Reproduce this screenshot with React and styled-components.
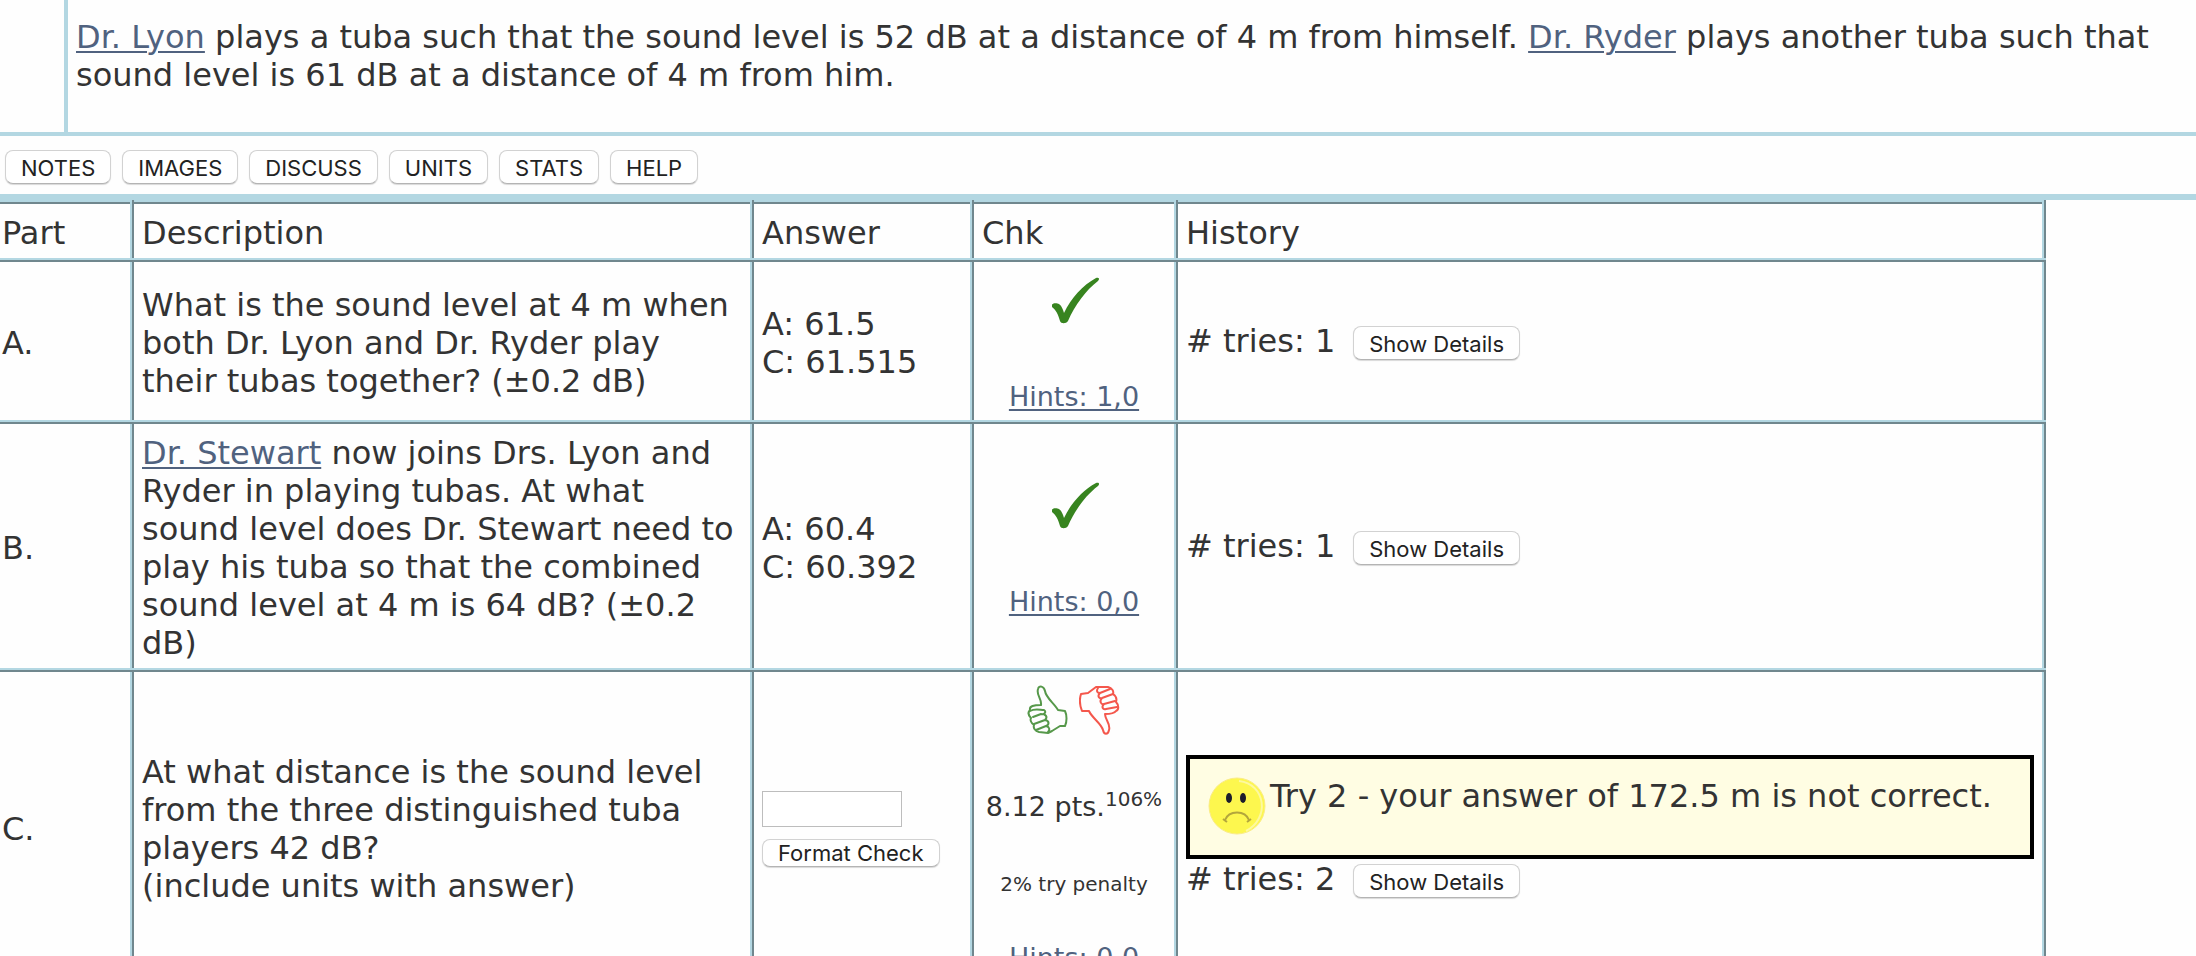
import React, { useState } from "react";
import styled, { createGlobalStyle } from "styled-components";

const tools = ["NOTES", "IMAGES", "DISCUSS", "UNITS", "STATS", "HELP"];

const CheckMark = () => (
  <svg width="60" height="54" viewBox="-2 0 60 54" role="img" aria-label="Correct">
    <path
      d="M6 34 C6 32 11 32 13 33 C16 35 17 39 18 42 C25 27 37 14 50 7 C53 6 54 8 52 10 C40 19 29 34 22 50 C20 53 15 53 14 50 C12 43 10 39 6 36 Z"
      fill="#37841f"
    />
  </svg>
);

const ThumbUp = () => (
  <svg width="42" height="56" viewBox="0 -3 42 56" role="img" aria-label="Thumb up">
    <g fill="none" stroke="#56984a" strokeWidth="2" strokeLinejoin="round" strokeLinecap="round">
      <path d="M14 21 C15 15 9 11 11 5 C12 1 17 2 18 7 C19 14 27 19 31 26 L38 27 C40 31 40 38 38 42 L33 42 L25 47 L21 49 L12 48 C8 47 6 44 7 41 C4 39 3 36 4 34 C1 31 1 28 3 26 C2 22 7 21 14 21 Z" />
      <path d="M3 27 C8 24 13 26 17 26 C20 28 17 31 14 30 L6 33 M14 30 C19 30 21 33 18 36 L7 40 M18 36 C23 37 22 41 19 42 L9 46 M19 42 C23 43 23 46 21 48" />
    </g>
  </svg>
);

const ThumbDown = () => (
  <svg width="42" height="56" viewBox="0 -1 42 56" role="img" aria-label="Thumb down">
    <g fill="none" stroke="#f4574c" strokeWidth="2" strokeLinejoin="round" strokeLinecap="round">
      <path d="M2 12 L9 11 L17 5 L29 5 C33 6 35 9 34 12 C37 14 38 17 37 20 C40 23 40 28 37 29 C35 32 30 32 26 32 C26 38 32 42 30 48 C29 53 25 53 24 48 C22 41 13 36 10 29 L3 29 C1 24 0 18 2 12 Z" />
      <path d="M19 6 C17 9 18 11 21 11 L31 7 M21 11 C18 14 20 17 23 16 L34 12 M23 16 C20 19 22 23 25 22 L36 19 M25 22 C22 25 24 28 27 27 L38 25" />
    </g>
  </svg>
);

const SadFace = () => (
  <svg width="60" height="60" viewBox="-1 0 60 60" role="img" aria-label="Incorrect">
    <circle cx="30" cy="29" r="28" fill="#fdf74e" stroke="#fbec86" strokeWidth="1" />
    <path d="M32 4 C59 7 63 42 39 54" fill="none" stroke="#fdf9a0" strokeWidth="2" />
    <ellipse cx="22" cy="21" rx="3" ry="5" fill="#1c1c2c" />
    <ellipse cx="36" cy="21" rx="3" ry="5" fill="#1c1c2c" />
    <path d="M18 43 C22 33 38 33 42 43" fill="none" stroke="#b3a63c" strokeWidth="2" />
    <path d="M16 42 L20 45 M40 45 L44 42" stroke="#b3a63c" strokeWidth="2" />
  </svg>
);

function Tries({ count }) {
  return (
    <TriesLine>
      # tries: {count} <DetailsButton type="button">Show Details</DetailsButton>
    </TriesLine>
  );
}

export default function App() {
  const [answer, setAnswer] = useState("");
  return (
    <Page>
      <GlobalStyle />
      <Problem>
        <Statement>
          <a href="#lyon">Dr. Lyon</a> plays a tuba such that the sound level is 52 dB at a
          distance of 4 m from himself. <a href="#ryder">Dr. Ryder</a> plays another tuba such
          that sound level is 61 dB at a distance of 4 m from him.
        </Statement>
      </Problem>
      <Toolbar>
        {tools.map((tool) => (
          <Button type="button" key={tool}>
            {tool}
          </Button>
        ))}
      </Toolbar>
      <TableWrap>
        <Table>
          <colgroup>
            <Col $width={132} />
            <Col $width={620} />
            <Col $width={220} />
            <Col $width={204} />
            <col />
          </colgroup>
          <thead>
            <tr>
              <th>Part</th>
              <th>Description</th>
              <th>Answer</th>
              <th>Chk</th>
              <th>History</th>
            </tr>
          </thead>
          <tbody>
            <tr>
              <td>A.</td>
              <td>
                What is the sound level at 4 m when both Dr. Lyon and Dr. Ryder play their tubas
                together? (±0.2 dB)
              </td>
              <td>
                A: 61.5
                <br />
                C: 61.515
              </td>
              <CheckCell>
                <Marks>
                  <CheckMark />
                </Marks>
                <Hints href="#hints-a" $gap={56}>
                  Hints: 1,0
                </Hints>
              </CheckCell>
              <HistoryCell>
                <Tries count={1} />
              </HistoryCell>
            </tr>
            <tr>
              <td>B.</td>
              <td>
                <a href="#stewart">Dr. Stewart</a> now joins Drs. Lyon and Ryder in playing tubas.
                At what sound level does Dr. Stewart need to play his tuba so that the combined
                sound level at 4 m is 64 dB? (±0.2 dB)
              </td>
              <td>
                A: 60.4
                <br />
                C: 60.392
              </td>
              <CheckCell>
                <Marks>
                  <CheckMark />
                </Marks>
                <Hints href="#hints-b" $gap={56}>
                  Hints: 0,0
                </Hints>
              </CheckCell>
              <HistoryCell>
                <Tries count={1} />
              </HistoryCell>
            </tr>
            <tr>
              <td>C.</td>
              <td>
                At what distance is the sound level from the three distinguished tuba players 42
                dB?
                <br />
                (include units with answer)
              </td>
              <td>
                <AnswerForm>
                  <AnswerInput
                    type="text"
                    aria-label="Answer for part C"
                    value={answer}
                    onChange={(e) => setAnswer(e.target.value)}
                  />
                  <Button type="button" $small>
                    Format Check
                  </Button>
                </AnswerForm>
              </td>
              <CheckCell>
                <Marks>
                  <ThumbUp />
                  <ThumbDown />
                </Marks>
                <Points>
                  8.12 pts.<sup>106%</sup>
                </Points>
                <Penalty>2% try penalty</Penalty>
                <Hints href="#hints-c" $gap={46}>
                  Hints: 0,0
                </Hints>
              </CheckCell>
              <HistoryCell>
                <Feedback>
                  <SadFace />
                  <p>Try 2 - your answer of 172.5 m is not correct.</p>
                </Feedback>
                <Tries count={2} />
              </HistoryCell>
            </tr>
          </tbody>
        </Table>
      </TableWrap>
    </Page>
  );
}

const GlobalStyle = createGlobalStyle`
  * {
    box-sizing: border-box;
  }
  body {
    margin: 0;
    background: #fefefe;
    color: #333;
    font-family: Verdana, "DejaVu Sans", sans-serif;
    font-size: 32px;
    line-height: 38px;
  }
  a {
    color: #50627f;
    text-decoration-thickness: 2px;
    text-underline-offset: 3px;
  }
  p {
    margin: 0;
  }
`;

const Page = styled.main`
  height: 100vh;
  overflow: hidden;
`;

const Problem = styled.section`
  padding-left: 64px;
  border-bottom: 4px solid #b3d7e2;
`;

const Statement = styled.p`
  padding: 18px 8px 38px;
  border-left: 4px solid #b3d7e2;
`;

const Toolbar = styled.nav`
  display: flex;
  gap: 11px;
  padding: 14px 5px 10px;
  border-bottom: 6px solid #b3d7e2;
`;

const Button = styled.button`
  height: ${(props) => (props.$small ? "28px" : "34px")};
  padding: ${(props) => (props.$small ? "0 15px" : "2px 15px 0")};
  border: 1px solid #d2d2d2;
  border-bottom-color: #b4b4b4;
  border-radius: 8px;
  background: white;
  box-shadow: 0 1px 1px rgba(0, 0, 0, 0.15);
  color: #222;
  font-family: Inter, sans-serif;
  font-size: 22px;
  line-height: 24px;
  white-space: nowrap;
`;

const DetailsButton = styled(Button)`
  margin-top: 4px;
`;

const TableWrap = styled.div`
  padding-right: 150px;
`;

const Table = styled.table`
  width: 100%;
  table-layout: fixed;
  border-collapse: collapse;

  th,
  td {
    padding: 10px 8px 6px;
    border: 4px ridge #b3d7e2;
    font-weight: 400;
    text-align: left;
    vertical-align: middle;
  }
  th:first-child,
  td:first-child {
    padding-left: 2px;
    border-left: none;
  }
`;

const Col = styled.col`
  width: ${(props) => props.$width}px;
`;

const CheckCell = styled.td`
  && {
    padding: 9px 4px 7px;
    text-align: center;
  }
`;

const HistoryCell = styled.td`
  && {
    padding: 8px;
  }
`;

const Marks = styled.div`
  display: flex;
  justify-content: center;
  gap: 10px;
`;

const Hints = styled.a`
  display: block;
  margin-top: ${(props) => props.$gap}px;
  font-size: 27px;
  line-height: 32px;
`;

const Points = styled.p`
  margin-top: 54px;
  font-size: 27px;
  line-height: 32px;
  white-space: nowrap;

  sup {
    font-size: 20px;
    line-height: 0;
  }
`;

const Penalty = styled.p`
  margin-top: 49px;
  font-size: 20px;
  line-height: 24px;
`;

const TriesLine = styled.div`
  display: flex;
  align-items: center;
  gap: 18px;
  height: 40px;
`;

const AnswerForm = styled.div`
  display: flex;
  flex-direction: column;
  align-items: flex-start;
  gap: 12px;
`;

const AnswerInput = styled.input`
  width: 140px;
  height: 36px;
  padding: 2px 4px;
  border: 1px solid #bdbdbd;
  background: white;
  font: inherit;
  font-size: 22px;
`;

const Feedback = styled.div`
  display: flex;
  align-items: flex-start;
  gap: 4px;
  padding: 18px 16px;
  border: 4px solid black;
  background: #fffde3;
`;
